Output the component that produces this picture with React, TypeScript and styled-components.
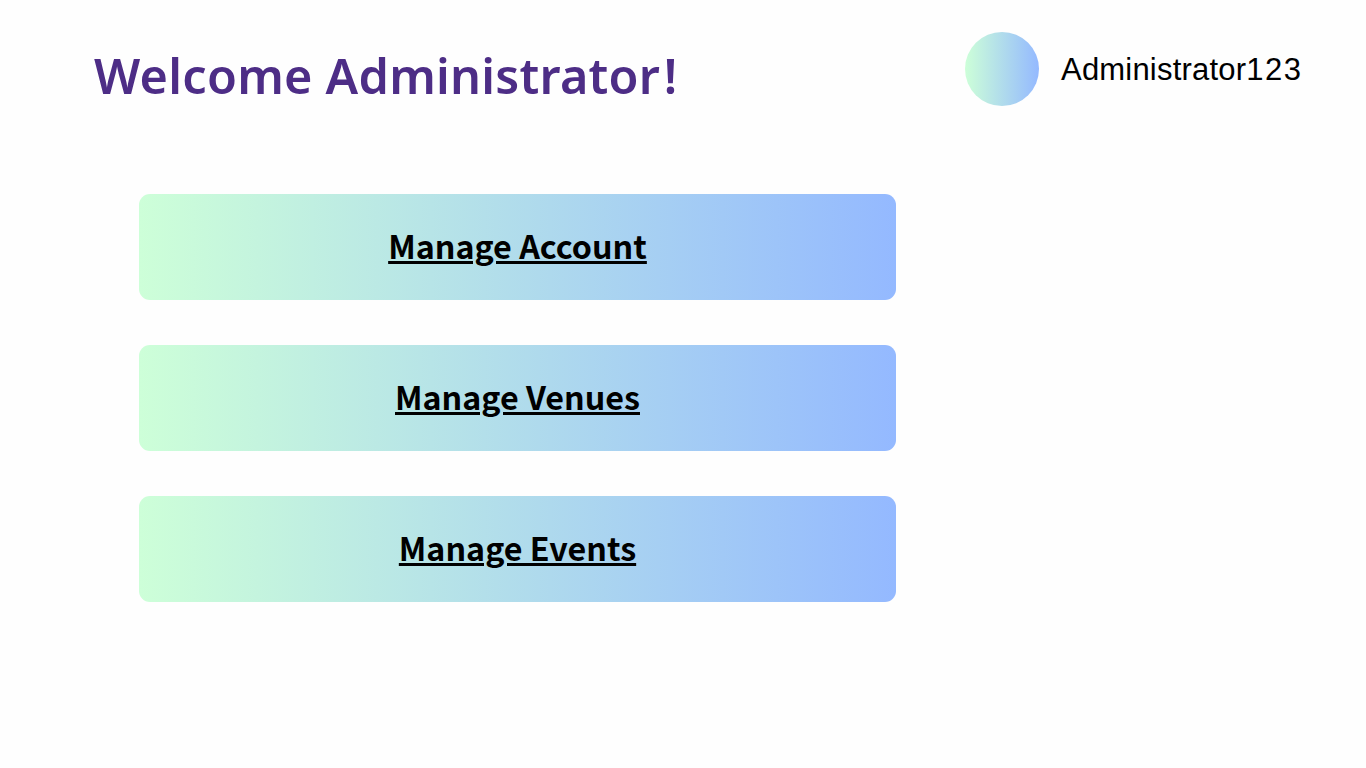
import React from "react";
import styled, { createGlobalStyle } from "styled-components";

const gradient = "linear-gradient(90deg, #cdffd8 0%, #94b9ff 100%)";

const GlobalStyle = createGlobalStyle`
  * { box-sizing: border-box; }
  body { margin: 0; background: #ffffff; }
`;

const Page = styled.main`
  width: 1366px;
  height: 768px;
  overflow: hidden;
  background: #fefefe;
`;

const Header = styled.header`
  display: flex;
  justify-content: space-between;
  height: 194px;
  padding: 32px 64px 0 94px;
`;

const Title = styled.h1`
  margin: 7px 0 0;
  font: 600 48.6px/72px "Noto Sans", sans-serif;
  letter-spacing: 0.25px;
  color: #4d2d86;
  white-space: nowrap;
`;

const Exclamation = styled.span`
  margin-left: 3.5px;
`;

const Profile = styled.div`
  display: flex;
  align-items: center;
  gap: 22px;
  height: 74px;
`;

const Avatar = styled.div`
  width: 74px;
  height: 74px;
  border-radius: 50%;
  background: ${gradient};
`;

const UserName = styled.span`
  width: 241px;
  padding-top: 2px;
  font: 400 31px/40px "Liberation Sans", Arial, sans-serif;
  letter-spacing: 0.2px;
  color: #000;
  white-space: nowrap;
`;

const Digits = styled.span`
  letter-spacing: 1.5px;
`;

const Menu = styled.nav`
  display: flex;
  flex-direction: column;
  gap: 45px;
  width: 757px;
  margin-left: 139px;
`;

const MenuButton = styled.a`
  display: flex;
  align-items: center;
  justify-content: center;
  height: 106px;
  padding-bottom: 4px;
  border-radius: 11px;
  background: ${gradient};
  color: #000;
  font: 700 32.25px/50px "Noto Sans CJK SC", sans-serif;
  text-decoration: underline;
  text-decoration-thickness: 3px;
`;

const items = ["Manage Account", "Manage Venues", "Manage Events"];

export default function App() {
  return (
    <Page>
      <GlobalStyle />
      <Header>
        <Title>Welcome Administrator<Exclamation>!</Exclamation></Title>
        <Profile>
          <Avatar />
          <UserName>Administrator<Digits>123</Digits></UserName>
        </Profile>
      </Header>
      <Menu>
        {items.map((label) => (
          <MenuButton key={label} href="#">{label}</MenuButton>
        ))}
      </Menu>
    </Page>
  );
}
